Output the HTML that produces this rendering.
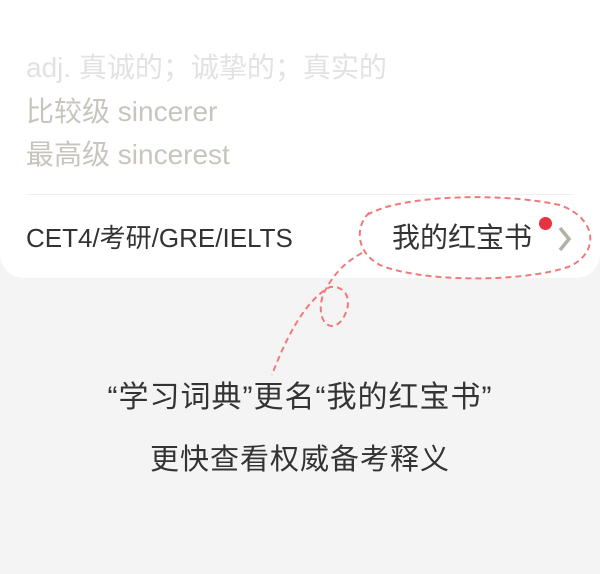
<html><head><style>
body{margin:0;width:600px;height:574px;background:#f4f4f4;position:relative;overflow:hidden;font-family:"Liberation Sans","Noto Sans CJK SC",sans-serif}
.card{position:absolute;left:0;top:0;width:600px;height:278px;background:#fff;border-radius:0 0 24px 24px}
.t{position:absolute;left:26px;font-size:28px;white-space:nowrap;line-height:32px}
.b{position:absolute;left:0;width:600px;text-align:center;font-size:30px;color:#333;line-height:34px;letter-spacing:1px}
</style></head><body>
<div class="card"></div>
<div class="t" style="top:52px;color:#e2e2e2">adj. 真诚的；诚挚的；真实的</div>
<div class="t" style="top:96px;color:#c9c5be">比较级 sincerer</div>
<div class="t" style="top:139px;color:#c9c5be">最高级 sincerest</div>
<div style="position:absolute;left:26px;top:194px;width:548px;height:1px;background:#f0f0f0"></div>
<div class="t" style="top:222px;color:#333;font-size:26px">CET4/考研/GRE/IELTS</div>
<div class="t" style="left:392px;top:222px;color:#333;font-size:28px">我的红宝书</div>
<div style="position:absolute;left:539px;top:217px;width:13px;height:13px;border-radius:50%;background:#e8323f"></div>
<svg style="position:absolute;left:0;top:0" width="600" height="574">
<path d="M560 228 L569 239 L560 250" fill="none" stroke="#b5b0a5" stroke-width="3.5"/>
<g fill="none" stroke="#f07a7a" stroke-width="2" stroke-dasharray="6 4">
<path d="M367 215 C400 195 500 192 560 205 C600 220 598 255 568 267 C520 283 420 282 380 265 C355 252 355 225 370 212"/>
<path d="M362 253 C340 265 330 280 323 295 C315 320 330 335 342 320 C355 300 345 285 330 287 C305 300 285 340 272 375"/>
</g>
</svg>
<div class="b" style="top:381px">“学习词典”更名“我的红宝书”</div>
<div class="b" style="top:443px;font-size:29px;letter-spacing:1px">更快查看权威备考释义</div>
</body></html>
